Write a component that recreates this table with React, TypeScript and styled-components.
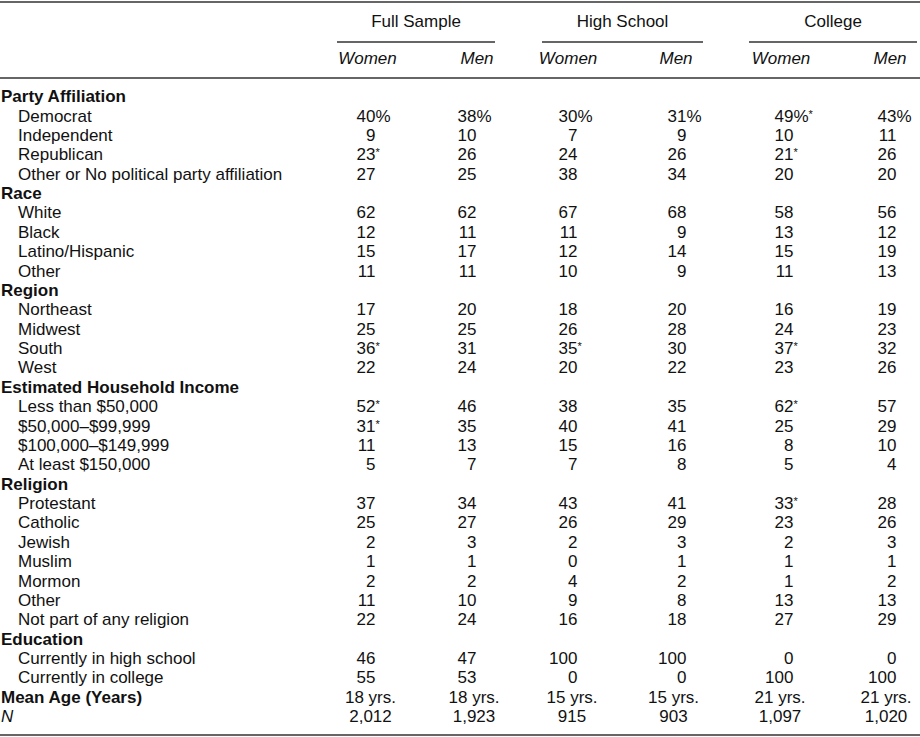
import React from 'react';
import styled, { createGlobalStyle } from 'styled-components';

type Column = { name: string; w: number; pr: number; sum: number; head: number };
type Group = { title: string; gap: number; cols: Column[] };
type Section = { title: string; rows: string[][] };

const RULE = '2px solid #666';

// pr = padding that puts the digits' right edge in place,
// sum / head = how far the totals and the Women/Men labels sit from the column middle
const groups: Group[] = [
  {
    title: 'Full Sample',
    gap: 47,
    cols: [
      { name: 'Women', w: 79, pr: 40.6, sum: -6, head: -9 },
      { name: 'Men', w: 79, pr: 18.6, sum: 18.5, head: 21.5 },
    ],
  },
  {
    title: 'High School',
    gap: 46,
    cols: [
      { name: 'Women', w: 80, pr: 44.6, sum: -10, head: -14 },
      { name: 'Men', w: 81, pr: 16.6, sum: 11, head: 13.5 },
    ],
  },
  {
    title: 'College',
    gap: 3,
    cols: [
      { name: 'Women', w: 84, pr: 39.6, sum: -11, head: -10 },
      { name: 'Men', w: 84, pr: 20.6, sum: 11, head: 15 },
    ],
  },
];

const sections: Section[] = [
  {
    title: 'Party Affiliation',
    rows: [
      ['Democrat', '40%', '38%', '30%', '31%', '49%*', '43%'],
      ['Independent', '9', '10', '7', '9', '10', '11'],
      ['Republican', '23*', '26', '24', '26', '21*', '26'],
      ['Other or No political party affiliation', '27', '25', '38', '34', '20', '20'],
    ],
  },
  {
    title: 'Race',
    rows: [
      ['White', '62', '62', '67', '68', '58', '56'],
      ['Black', '12', '11', '11', '9', '13', '12'],
      ['Latino/Hispanic', '15', '17', '12', '14', '15', '19'],
      ['Other', '11', '11', '10', '9', '11', '13'],
    ],
  },
  {
    title: 'Region',
    rows: [
      ['Northeast', '17', '20', '18', '20', '16', '19'],
      ['Midwest', '25', '25', '26', '28', '24', '23'],
      ['South', '36*', '31', '35*', '30', '37*', '32'],
      ['West', '22', '24', '20', '22', '23', '26'],
    ],
  },
  {
    title: 'Estimated Household Income',
    rows: [
      ['Less than $50,000', '52*', '46', '38', '35', '62*', '57'],
      ['$50,000–$99,999', '31*', '35', '40', '41', '25', '29'],
      ['$100,000–$149,999', '11', '13', '15', '16', '8', '10'],
      ['At least $150,000', '5', '7', '7', '8', '5', '4'],
    ],
  },
  {
    title: 'Religion',
    rows: [
      ['Protestant', '37', '34', '43', '41', '33*', '28'],
      ['Catholic', '25', '27', '26', '29', '23', '26'],
      ['Jewish', '2', '3', '2', '3', '2', '3'],
      ['Muslim', '1', '1', '0', '1', '1', '1'],
      ['Mormon', '2', '2', '4', '2', '1', '2'],
      ['Other', '11', '10', '9', '8', '13', '13'],
      ['Not part of any religion', '22', '24', '16', '18', '27', '29'],
    ],
  },
  {
    title: 'Education',
    rows: [
      ['Currently in high school', '46', '47', '100', '100', '0', '0'],
      ['Currently in college', '55', '53', '0', '0', '100', '100'],
    ],
  },
];

const totals = [
  { label: 'Mean Age (Years)', italic: false, values: ['18 yrs.', '18 yrs.', '15 yrs.', '15 yrs.', '21 yrs.', '21 yrs.'] },
  { label: 'N', italic: true, values: ['2,012', '1,923', '915', '903', '1,097', '1,020'] },
];

const GlobalStyle = createGlobalStyle`
  html, body {
    margin: 0;
    padding: 0;
    background: #fff;
  }
  body {
    font-family: "Liberation Sans", Arial, Helvetica, sans-serif;
    font-size: 17px;
    color: #111;
  }
`;

const Table = styled.table`
  width: 920px;
  table-layout: fixed;
  border-collapse: separate;
  border-spacing: 0;
  margin-top: 1px;
  border-top: ${RULE};
  border-bottom: ${RULE};
  line-height: 19.375px;

  th,
  td {
    padding: 0;
  }

  tbody tr:first-child > td {
    padding-top: 8.6px;
  }
  tbody tr:last-child > td {
    padding-bottom: 7.3px;
  }
`;

const Col = styled.col<{ $w: number }>`
  width: ${p => p.$w}px;
`;

const TopCell = styled.th`
  font-weight: normal;
  padding: 9px 0 9.6px !important;
`;

const GroupTitle = styled(TopCell)`
  text-align: center;
  white-space: nowrap;
  border-bottom: ${RULE};
`;

const SubCell = styled.th`
  font-weight: normal;
  font-style: italic;
  padding: 6.5px 0 7.8px !important;
  border-bottom: ${RULE};
`;

const Center = styled.div<{ $shift: number }>`
  display: flex;
  justify-content: center;
  white-space: nowrap;
  padding-left: ${p => Math.max(0, p.$shift * 2)}px;
  padding-right: ${p => Math.max(0, -p.$shift * 2)}px;
`;

const Label = styled.td<{ $kind: 'section' | 'item' | 'total' | 'n' }>`
  white-space: nowrap;
  padding-left: ${p => (p.$kind === 'item' ? 18 : 1)}px !important;
  font-weight: ${p => (p.$kind === 'section' || p.$kind === 'total' ? 'bold' : 'normal')};
  font-style: ${p => (p.$kind === 'n' ? 'italic' : 'normal')};
`;

const NumCell = styled.td<{ $pr: number }>`
  text-align: right;
  white-space: nowrap;
  padding-right: ${p => p.$pr}px !important;
`;

// % and * hang past the digits so the digits stay aligned
const Hang = styled.span`
  display: inline-block;
  width: 0;
  text-align: left;
  white-space: nowrap;
`;

const Star = styled.span`
  font-size: 11px;
  line-height: 0;
  vertical-align: 4px;
`;

const Gap = styled.td``;

function Value({ text }: { text: string }) {
  const m = text.match(/^([\d,]+)(%?)(\*?)$/);
  if (!m) return <>{text}</>;
  const [, digits, pct, star] = m;
  return (
    <>
      {digits}
      {(pct || star) && (
        <Hang>
          {pct}
          {star && <Star>*</Star>}
        </Hang>
      )}
    </>
  );
}

function DataCells({ values }: { values: string[] }) {
  let i = 0;
  return (
    <>
      {groups.map(g => (
        <React.Fragment key={g.title}>
          {g.cols.map(c => (
            <NumCell key={c.name} $pr={c.pr}>
              <Value text={values[i++]} />
            </NumCell>
          ))}
          <Gap />
        </React.Fragment>
      ))}
    </>
  );
}

function SummaryCells({ values }: { values: string[] }) {
  let i = 0;
  return (
    <>
      {groups.map(g => (
        <React.Fragment key={g.title}>
          {g.cols.map(c => (
            <td key={c.name}>
              <Center $shift={c.sum}>{values[i++]}</Center>
            </td>
          ))}
          <Gap />
        </React.Fragment>
      ))}
    </>
  );
}

function EmptyCells() {
  return (
    <>
      {groups.map(g => (
        <React.Fragment key={g.title}>
          <td />
          <td />
          <Gap />
        </React.Fragment>
      ))}
    </>
  );
}

export default function App() {
  return (
    <>
      <GlobalStyle />
      <Table>
        <colgroup>
          <Col $w={337} />
          {groups.map(g => (
            <React.Fragment key={g.title}>
              {g.cols.map(c => (
                <Col key={c.name} $w={c.w} />
              ))}
              <Col $w={g.gap} />
            </React.Fragment>
          ))}
        </colgroup>
        <thead>
          <tr>
            <TopCell />
            {groups.map(g => (
              <React.Fragment key={g.title}>
                <GroupTitle colSpan={2}>{g.title}</GroupTitle>
                <TopCell />
              </React.Fragment>
            ))}
          </tr>
          <tr>
            <SubCell />
            {groups.map(g => (
              <React.Fragment key={g.title}>
                {g.cols.map(c => (
                  <SubCell key={c.name}>
                    <Center $shift={c.head}>{c.name}</Center>
                  </SubCell>
                ))}
                <SubCell />
              </React.Fragment>
            ))}
          </tr>
        </thead>
        <tbody>
          {sections.map(s => (
            <React.Fragment key={s.title}>
              <tr>
                <Label $kind="section">{s.title}</Label>
                <EmptyCells />
              </tr>
              {s.rows.map(r => (
                <tr key={r[0]}>
                  <Label $kind="item">{r[0]}</Label>
                  <DataCells values={r.slice(1)} />
                </tr>
              ))}
            </React.Fragment>
          ))}
          {totals.map(t => (
            <tr key={t.label}>
              <Label $kind={t.italic ? 'n' : 'total'}>{t.label}</Label>
              <SummaryCells values={t.values} />
            </tr>
          ))}
        </tbody>
      </Table>
    </>
  );
}
